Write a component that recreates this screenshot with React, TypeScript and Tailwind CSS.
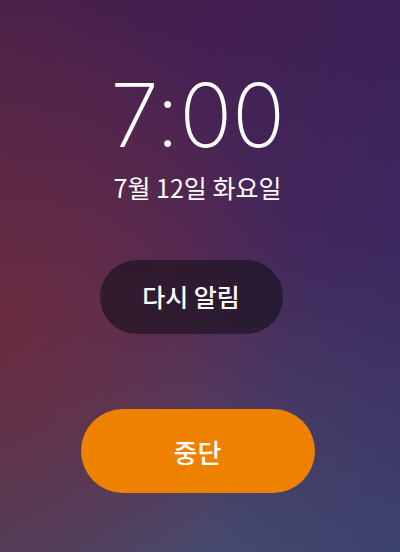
import React from 'react';

const App: React.FC = () => {
  return (
    <div className="relative w-[400px] h-[552px] overflow-hidden bg-[linear-gradient(180deg,#451e50_0%,#47285a_45%,#4a3c64_75%,#454a6e_100%)]">
      {/* warm glow on the left, cool tint on the right */}
      <div className="absolute inset-0 bg-[radial-gradient(ellipse_75%_60%_at_0%_58%,rgba(125,45,60,0.75),rgba(125,45,60,0)_100%)]" />
      <div className="absolute inset-0 bg-[linear-gradient(90deg,rgba(90,40,50,0.25)_0%,rgba(0,0,0,0)_50%,rgba(30,40,110,0.25)_100%)]" />

      <div className="relative flex flex-col items-center pt-[71px] pr-[5px] text-white">
        <div className="font-['Inter',sans-serif] font-extralight text-[88px] leading-none tracking-[-0.5px]">
          7:00
        </div>
        <div className="mt-[16px] font-['Noto_Sans_CJK_KR',sans-serif] text-[25px] leading-none">
          7월 12일 화요일
        </div>

        <button className="mt-[60px] mr-[13px] w-[183px] h-[74px] rounded-full bg-[rgba(20,15,25,0.6)] font-['Noto_Sans_CJK_KR',sans-serif] font-medium text-[25px] text-white">
          다시 알림
        </button>

        <button className="mt-[75px] w-[234px] h-[84px] rounded-full bg-[#ee8200] font-['Noto_Sans_CJK_KR',sans-serif] font-medium text-[26px] text-white">
          중단
        </button>
      </div>
    </div>
  );
};

export default App;
